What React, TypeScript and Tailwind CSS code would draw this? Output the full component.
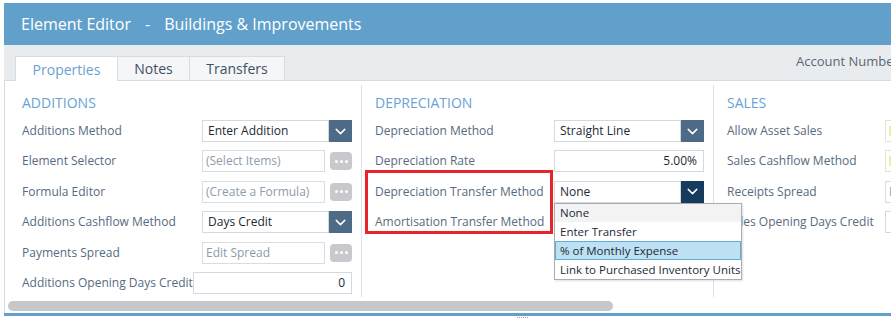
import { ChevronDown } from 'lucide-react';

const font = { fontFamily: '"Open Sans", "Liberation Sans", sans-serif' };

function Label({ children, w = 'w-[180px]' }: { children: React.ReactNode; w?: string }) {
  return <div className={`${w} shrink-0 whitespace-nowrap text-[12px] text-[#566b80]`}>{children}</div>;
}

function Select({ value, focused }: { value: string; focused?: boolean }) {
  return (
    <div className="flex h-[22px] w-[150px]">
      <div className="flex flex-1 items-center border border-[#d3d9df] bg-white px-[5px] text-[12px] text-[#1c2a38]">
        {value}
      </div>
      <div className={`flex w-[23px] items-center justify-center ${focused ? 'bg-[#173b5d]' : 'bg-[#4d6a86]'}`}>
        <ChevronDown className="h-[17px] w-[17px] text-white" strokeWidth={2} />
      </div>
    </div>
  );
}

function Picker({ placeholder }: { placeholder: string }) {
  return (
    <div className="flex h-[22px] w-[150px] items-center">
      <div className="flex h-full w-[123px] items-center whitespace-nowrap border border-[#d8dde2] bg-white px-[3px] text-[12px] text-[#8d9bab]">
        {placeholder}
      </div>
      <div className="ml-auto flex h-[18px] w-[22px] items-center justify-center gap-[2px] rounded-[4px] bg-[#c9c9cd]">
        <span className="h-[3px] w-[3px] rounded-full bg-white" />
        <span className="h-[3px] w-[3px] rounded-full bg-white" />
        <span className="h-[3px] w-[3px] rounded-full bg-white" />
      </div>
    </div>
  );
}

function NumberBox({ value, width = 'w-[150px]' }: { value: string; width?: string }) {
  return (
    <div className={`flex h-[22px] ${width} items-center justify-end border border-[#d3d9df] bg-white px-[6px] text-[12px] text-[#1c2a38]`}>
      {value}
    </div>
  );
}

function Row({ children }: { children: React.ReactNode }) {
  return <div className="flex h-[22px] items-center">{children}</div>;
}

function Heading({ children }: { children: React.ReactNode }) {
  return <div className="mb-[8px] h-[19px] text-[14px] leading-[19px] text-[#6aa1d3]">{children}</div>;
}

export default function App() {
  return (
    <div className="relative h-[319px] w-[891px] overflow-hidden bg-white pl-[4px] pt-[3px]" style={font}>
      {/* Title bar */}
      <div className="flex h-[42px] items-center bg-[#62a0cc] pl-[17px] text-[16px] text-white">
        <span>Element Editor</span>
        <span className="mx-[14px]">-</span>
        <span>Buildings &amp; Improvements</span>
      </div>

      {/* Tabs */}
      <div className="flex h-[36px] items-end border-b border-[#d5dce2] bg-[#e9ecef] pl-[11px]">
        <div className="-mb-px flex h-[25px] w-[103px] shrink-0 items-center justify-center border border-b-0 border-[#d5dce2] bg-white text-[14px] text-[#6aa1d3]">
          Properties
        </div>
        <div className="flex h-[24px] w-[72px] shrink-0 items-center justify-center border border-b-0 border-l-0 border-[#d5dce2] bg-[#f4f6f8] text-[14px] text-[#3f5063]">
          Notes
        </div>
        <div className="flex h-[24px] w-[95px] shrink-0 items-center justify-center border border-b-0 border-l-0 border-[#d5dce2] bg-[#f4f6f8] text-[14px] text-[#3f5063]">
          Transfers
        </div>
        <div className="mb-[9px] ml-[511px] shrink-0 whitespace-nowrap text-[13px] text-[#5b6672]">Account Number</div>
      </div>

      {/* Body */}
      <div className="border-l border-[#d5dce2]">
        <div className="flex pt-[4px]">
          {/* Additions */}
          <div className="h-[212px] w-[356px] shrink-0 pl-[17px] pt-[8px]">
            <Heading>ADDITIONS</Heading>
            <div className="flex flex-col gap-[8.4px]">
              <Row>
                <Label>Additions Method</Label>
                <Select value="Enter Addition" />
              </Row>
              <Row>
                <Label>Element Selector</Label>
                <Picker placeholder="(Select Items)" />
              </Row>
              <Row>
                <Label>Formula Editor</Label>
                <Picker placeholder="(Create a Formula)" />
              </Row>
              <Row>
                <Label>Additions Cashflow Method</Label>
                <Select value="Days Credit" />
              </Row>
              <Row>
                <Label>Payments Spread</Label>
                <Picker placeholder="Edit Spread" />
              </Row>
              <div className="flex h-[22px] w-[330px] items-center">
                <Label w="">Additions Opening Days Credit</Label>
                <div className="ml-auto">
                  <NumberBox value="0" width="w-[159px]" />
                </div>
              </div>
            </div>
          </div>

          {/* Depreciation */}
          <div className="relative h-[212px] w-[352px] shrink-0 border-l border-[#dfe3e7] pl-[13px] pt-[8px]">
            <Heading>DEPRECIATION</Heading>
            <div className="flex flex-col gap-[8.4px]">
              <Row>
                <Label w="w-[179px]">Depreciation Method</Label>
                <Select value="Straight Line" />
              </Row>
              <Row>
                <Label w="w-[179px]">Depreciation Rate</Label>
                <NumberBox value="5.00%" />
              </Row>
              <Row>
                <Label w="w-[179px]">Depreciation Transfer Method</Label>
                <div className="relative">
                  <Select value="None" focused />
                  {/* open list */}
                  <div className="absolute left-0 top-[22px] z-10 w-[188px] whitespace-nowrap border border-[#a9adb1] bg-white text-[11.5px] text-[#1c2a38] shadow-[1px_1px_2px_rgba(0,0,0,0.12)]">
                    <div className="flex h-[18px] items-center bg-[#f3f3f3] px-[5px]">None</div>
                    <div className="flex h-[19px] items-center px-[5px]">Enter Transfer</div>
                    <div className="flex h-[19px] items-center border border-[#62acd9] bg-[#bde1f3] px-[4px]">% of Monthly Expense</div>
                    <div className="flex h-[19px] items-center px-[5px]">Link to Purchased Inventory Units</div>
                  </div>
                </div>
              </Row>
              <Row>
                <Label w="w-[179px]">Amortisation Transfer Method</Label>
              </Row>
            </div>
            {/* highlight box */}
            <div className="pointer-events-none absolute left-[3px] top-[85px] h-[64px] w-[188px] border-[3px] border-[#e8232b]" />
          </div>

          {/* Sales */}
          <div className="h-[212px] w-[300px] shrink-0 border-l border-[#dfe3e7] pl-[13px] pt-[8px]">
            <Heading>SALES</Heading>
            <div className="flex flex-col gap-[8.4px]">
              <Row>
                <Label w="w-[158px]">Allow Asset Sales</Label>
                <div className="flex h-[22px] w-[60px] items-center border border-[#e3e3d8] bg-white pl-[3px]">
                  <span className="h-[10px] w-[2px] bg-[#f3eba0]" />
                </div>
              </Row>
              <Row>
                <Label w="w-[158px]">Sales Cashflow Method</Label>
                <div className="flex h-[22px] w-[60px] items-center border border-[#e3e3d8] bg-white pl-[3px]">
                  <span className="h-[10px] w-[2px] bg-[#f3eba0]" />
                </div>
              </Row>
              <Row>
                <Label w="w-[158px]">Receipts Spread</Label>
                <div className="flex h-[22px] w-[60px] items-center whitespace-nowrap border border-[#d8dde2] bg-white px-[3px] text-[12px] text-[#8d9bab]">
                  Edit Spread
                </div>
              </Row>
              <Row>
                <Label w="w-[158px]">Sales Opening Days Credit</Label>
                <div className="h-[22px] w-[60px] border border-[#d3d9df] bg-white" />
              </Row>
            </div>
          </div>
        </div>

        {/* Horizontal scrollbar */}
        <div className="pb-[2px] pl-[3px] pt-[4px]">
          <div className="h-[10px] w-[605px] rounded-full bg-[#c6c7cb]" />
        </div>
      </div>

      {/* Footer line */}
      <div className="h-[3px] bg-[#62a0cc]" />
      <div className="flex justify-center pl-[150px] pt-[1px]">
        <div className="h-[2px] w-[11px] border-t border-dotted border-[#9aa3ad]" />
      </div>
    </div>
  );
}
